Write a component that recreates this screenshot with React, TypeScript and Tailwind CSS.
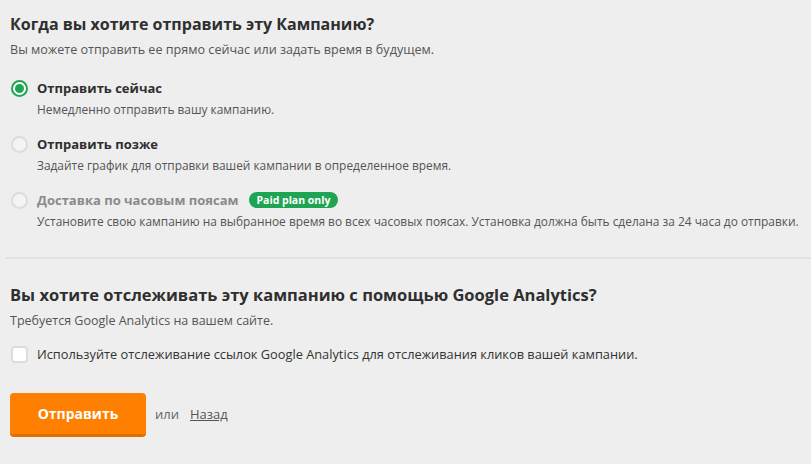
import React, { useState } from "react";

const font = { fontFamily: '"Open Sans", "Liberation Sans", sans-serif' };

function Radio({ checked }: { checked: boolean }) {
  return checked ? (
    <span className="flex h-[17px] w-[17px] shrink-0 items-center justify-center rounded-full border-2 border-[#1da553] bg-white">
      <span className="block h-[9px] w-[9px] rounded-full bg-[#1da553]" />
    </span>
  ) : (
    <span className="block h-[17px] w-[17px] shrink-0 rounded-full border-2 border-[#dcdcdc] bg-[#f4f4f4]" />
  );
}

const options = [
  {
    id: "now",
    title: "Отправить сейчас",
    desc: "Немедленно отправить вашу кампанию.",
  },
  {
    id: "later",
    title: "Отправить позже",
    desc: "Задайте график для отправки вашей кампании в определенное время.",
  },
  {
    id: "tz",
    title: "Доставка по часовым поясам",
    desc: "Установите свою кампанию на выбранное время во всех часовых поясах. Установка должна быть сделана за 24 часа до отправки.",
    paid: true,
  },
];

export default function App() {
  const [selected, setSelected] = useState("now");

  return (
    <div className="min-h-screen w-full bg-[#eeeeee] text-[#333]" style={font}>
      <div className="px-[10px] pt-[12px]">
        <h2 className="text-[16px] font-bold leading-6 text-[#2f2f2f]">
          Когда вы хотите отправить эту Кампанию?
        </h2>
        <p className="mt-[4px] text-[12.6px] leading-5 text-[#555]">
          Вы можете отправить ее прямо сейчас или задать время в будущем.
        </p>

        <div className="mt-[18px] flex flex-col gap-[17px]">
          {options.map((o) => (
            <div
              key={o.id}
              className="flex cursor-pointer gap-[9px]"
              onClick={() => !o.paid && setSelected(o.id)}
            >
              <div className="pt-[2px] pl-[1px]">
                <Radio checked={selected === o.id} />
              </div>
              <div>
                <div className="flex items-center gap-[10px]">
                  <span
                    className={`text-[13px] font-bold leading-5 ${
                      o.paid ? "text-[#8a8a8a]" : "text-[#2f2f2f]"
                    }`}
                  >
                    {o.title}
                  </span>
                  {o.paid && (
                    <span className="rounded-full bg-[#1da553] px-[8px] text-[10.5px] font-bold leading-[16px] text-white">
                      Paid plan only
                    </span>
                  )}
                </div>
                <p className="mt-[3px] whitespace-nowrap text-[11.9px] leading-4 text-[#555]">
                  {o.desc}
                </p>
              </div>
            </div>
          ))}
        </div>
      </div>

      <hr className="mt-[28px] ml-[6px] border-t-2 border-[#e2e2e2]" />

      <div className="px-[10px] pt-[24px]">
        <h2 className="text-[16.5px] font-bold leading-6 text-[#2f2f2f]">
          Вы хотите отслеживать эту кампанию с помощью Google Analytics?
        </h2>
        <p className="mt-[4px] text-[12.5px] leading-5 text-[#555]">
          Требуется Google Analytics на вашем сайте.
        </p>

        <label className="mt-[13px] flex items-center gap-[9px]">
          <span className="ml-[1px] block h-[17px] w-[17px] shrink-0 rounded-[4px] border-2 border-[#dcdcdc] bg-white" />
          <span className="text-[12.8px] leading-5 text-[#333]">
            Используйте отслеживание ссылок Google Analytics для отслеживания кликов вашей кампании.
          </span>
        </label>

        <div className="mt-[29px] flex items-center gap-[9px]">
          <button className="h-[44px] w-[136px] rounded-[4px] border-b-[3px] border-[#e06f00] bg-[#ff8000] text-[14px] font-bold text-white">
            Отправить
          </button>
          <span className="text-[13px] text-[#666]">или</span>
          <a href="#" className="ml-[2px] text-[13px] text-[#555] underline">
            Назад
          </a>
        </div>
      </div>
    </div>
  );
}
